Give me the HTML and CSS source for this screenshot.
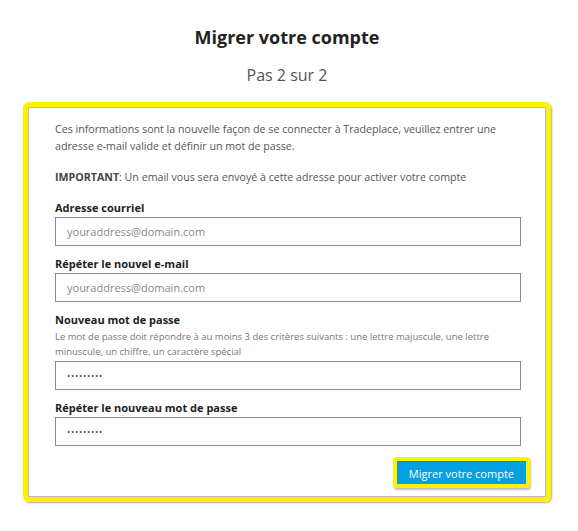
FILE: index.html
```html
<html lang="fr">
  <head>
    <meta charset="UTF-8" />
    <meta name="viewport" content="width=device-width, initial-scale=1.0" />
    <title>Migrer votre compte</title>
    <link rel="stylesheet" href="styles.css">
  </head>
  <body>
    <div class="page">
      <h1 class="title">Migrer votre compte</h1>
      <p class="step">Pas 2 sur 2</p>

      <div class="highlight">
        <form class="card">
          <p class="intro">Ces informations sont la nouvelle façon de se connecter à Tradeplace, veuillez entrer une adresse e-mail valide et définir un mot de passe.</p>
          <p class="intro"><b>IMPORTANT</b>: Un email vous sera envoyé à cette adresse pour activer votre compte</p>

          <div class="field first">
            <label for="email">Adresse courriel</label>
            <input id="email" type="text" placeholder="youraddress@domain.com" />
          </div>
          <div class="field">
            <label for="email2">Répéter le nouvel e-mail</label>
            <input id="email2" type="text" placeholder="youraddress@domain.com" />
          </div>
          <div class="field">
            <label for="pwd">Nouveau mot de passe</label>
            <span class="hint">Le mot de passe doit répondre à au moins 3 des critères suivants : une lettre majuscule, une lettre minuscule, un chiffre, un caractère spécial</span>
            <input id="pwd" class="secret" type="password" value="abcdefghi" />
          </div>
          <div class="field">
            <label for="pwd2">Répéter le nouveau mot de passe</label>
            <input id="pwd2" class="secret" type="password" value="abcdefghi" />
          </div>

          <div class="actions">
            <button type="button" class="btn">Migrer votre compte</button>
          </div>
        </form>
      </div>
    </div>
  </body>
</html>
```

FILE: styles.css
```css
body {
  margin: 0;
  background: #fff;
  font-family: "Open Sans", "Liberation Sans", sans-serif;
  color: #333;
}

.page {
  width: 528px;
  margin: 0 27px 0 23px;
  padding-top: 24px;
}

.title {
  margin: 0;
  text-align: center;
  font-size: 18px;
  line-height: 26px;
  font-weight: 700;
  color: #222;
}

.step {
  margin: 14px 0 0;
  text-align: center;
  font-size: 16px;
  line-height: 22px;
  color: #555;
}

.highlight {
  margin-top: 16px;
  border: 5px solid #fff200;
  border-radius: 6px;
  box-shadow: 1px 1px 2px rgba(0, 0, 0, 0.35);
}

.card {
  margin: 0;
  border: 1px solid #bbb;
  padding: 13px 24px 12px 26px;
  background: #fff;
}

.intro {
  margin: 0 0 14px;
  font-size: 10.65px;
  line-height: 17px;
  color: #555;
}

.intro b {
  color: #444;
}

.field {
  margin-top: 10px;
}

.field.first {
  margin-top: 0;
}

.field label {
  display: block;
  font-size: 11px;
  line-height: 16px;
  font-weight: 700;
  color: #222;
  margin-bottom: 1px;
}

.field .hint {
  display: block;
  font-size: 9.5px;
  line-height: 15px;
  color: #777;
  margin-bottom: 2px;
}

.field input {
  display: block;
  width: 100%;
  height: 29px;
  box-sizing: border-box;
  border: 1px solid #8c8c8c;
  padding: 0 11px;
  font-family: "Open Sans", "Liberation Sans", sans-serif;
  font-size: 11px;
  color: #555;
  outline: none;
}

.field input.secret {
  font-size: 9px;
  letter-spacing: 0.6px;
  color: #555;
}

.field input::placeholder {
  color: #888;
}

.actions {
  display: flex;
  justify-content: flex-end;
  margin-top: 15px;
  margin-right: -5px;
}

.btn {
  height: 23px;
  padding: 0 12px;
  border: 0;
  border-top: 1px solid #0a7fb8;
  border-radius: 1px;
  background: #05a0e2;
  color: #fff;
  font-family: "Open Sans", "Liberation Sans", sans-serif;
  font-size: 11px;
  box-shadow: 0 0 0 4px #fff200, 1px 2px 2px 4px rgba(0, 0, 0, 0.25);
  cursor: pointer;
}
```
